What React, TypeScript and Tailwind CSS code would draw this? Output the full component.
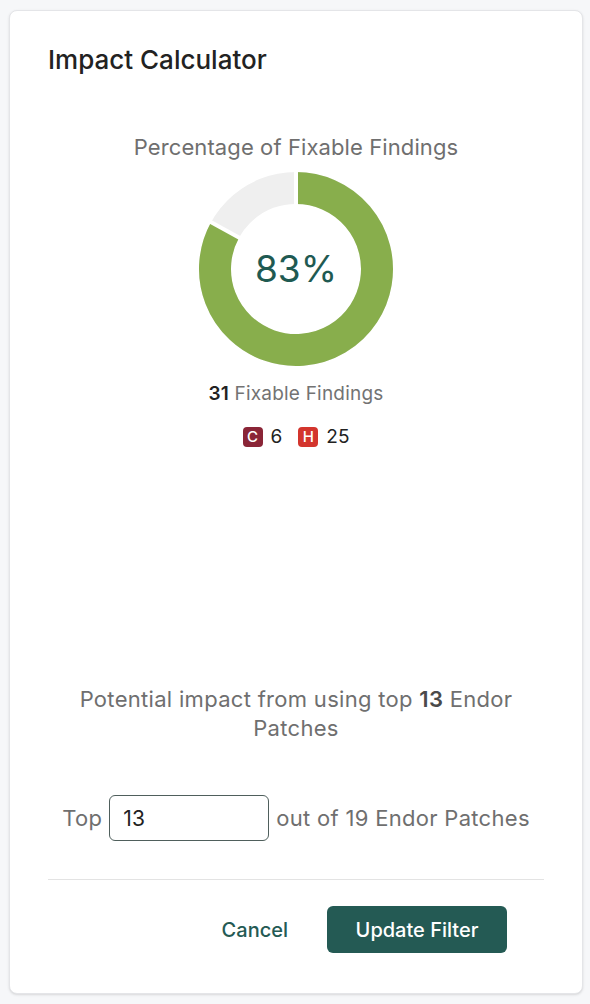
import { useState } from 'react'

const cx = 98
const cy = 98
const rMid = 81
const pct = 0.83

function polar(angle: number, r: number) {
  const a = (angle * Math.PI) / 180
  return { x: cx + r * Math.sin(a), y: cy - r * Math.cos(a) }
}

function Donut() {
  const end = pct * 360
  const start = polar(0, rMid)
  const stop = polar(end, rMid)
  const g1 = polar(0, 60)
  const g2 = polar(0, 102)
  const h1 = polar(end, 60)
  const h2 = polar(end, 102)
  return (
    <div className="relative w-[196px] h-[196px]">
      <svg width="196" height="196" viewBox="0 0 196 196">
        <circle cx={cx} cy={cy} r={rMid} fill="none" stroke="#efefef" strokeWidth="32" />
        <path
          d={`M ${start.x} ${start.y} A ${rMid} ${rMid} 0 1 1 ${stop.x} ${stop.y}`}
          fill="none"
          stroke="#88ae4c"
          strokeWidth="32"
        />
        <line x1={g1.x} y1={g1.y} x2={g2.x} y2={g2.y} stroke="#fff" strokeWidth="4" />
        <line x1={h1.x} y1={h1.y} x2={h2.x} y2={h2.y} stroke="#fff" strokeWidth="4" />
      </svg>
      <div className="absolute inset-0 flex items-center justify-center text-[37px] text-[#1f5a52]">
        83%
      </div>
    </div>
  )
}

export default function App() {
  const [top, setTop] = useState('13')

  return (
    <div className="min-h-screen bg-[#f6f7f9] pl-[9px] pr-[7px] pt-[10px] font-['Inter','Noto_Sans',sans-serif]">
      <div className="h-[984px] bg-white border border-[#e4e5e8] rounded-lg shadow-sm px-[38px] pt-[33px] pb-[40px] flex flex-col">
        {/* Title */}
        <h2 className="text-[26px] leading-8 font-medium text-[#222]">Impact Calculator</h2>

        {/* Chart */}
        <div className="flex flex-col items-center mt-[56px]">
          <div className="text-[22px] leading-[30px] text-[#6f6f6f] tracking-[0.1px]">Percentage of Fixable Findings</div>
          <div className="mt-[9px]">
            <Donut />
          </div>
          <div className="mt-[15px] text-[19px] leading-6 text-[#737373] tracking-[0.2px]">
            <span className="font-semibold text-[#222]">31</span> Fixable Findings
          </div>
          <div className="mt-[19px] h-6 flex items-center text-[19px] text-[#222]">
            <span className="w-[20px] h-[20px] rounded-[4px] bg-[#8a2537] text-white text-[15px] font-medium flex items-center justify-center">C</span>
            <span className="ml-[8px]">6</span>
            <span className="ml-[16px] w-[20px] h-[20px] rounded-[4px] bg-[#d3352d] text-white text-[15px] font-medium flex items-center justify-center">H</span>
            <span className="ml-[8px]">25</span>
          </div>
        </div>

        <div className="flex-1" />

        {/* Potential impact */}
        <div className="text-center text-[22px] leading-[29px] text-[#6f6f6f] tracking-[0.3px] px-[18px]">
          Potential impact from using top <span className="font-semibold text-[#4a4a4a]">13</span> Endor Patches
        </div>

        <div className="mt-[52px] flex items-center justify-center gap-[7px] text-[22px] text-[#6f6f6f] tracking-[0.3px]">
          <span>Top</span>
          <input
            value={top}
            onChange={e => setTop(e.target.value)}
            className="w-[160px] h-[46px] rounded-md border border-[#4f5f5c] px-[13px] text-[21px] text-[#222] outline-none"
          />
          <span>out of 19 Endor Patches</span>
        </div>

        <div className="mt-[38px] h-px bg-[#e3e3e3]" />

        {/* Actions */}
        <div className="mt-[26px] flex items-center justify-end gap-[39px] pr-[37px]">
          <button className="text-[20px] font-medium text-[#245a54]">Cancel</button>
          <button className="h-[47px] w-[180px] rounded-md bg-[#245a54] text-white text-[20px] font-medium">
            Update Filter
          </button>
        </div>
      </div>
    </div>
  )
}
